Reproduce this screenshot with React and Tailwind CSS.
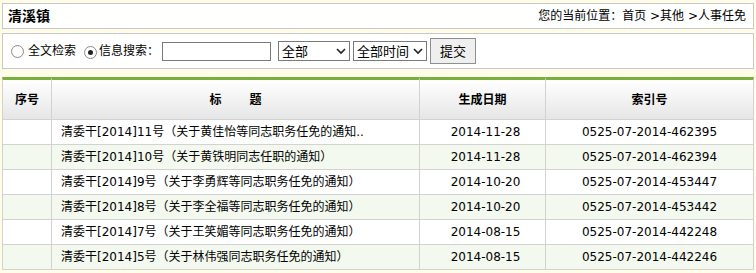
import React from "react";

const rows = [
  { title: "清委干[2014]11号（关于黄佳怡等同志职务任免的通知..", date: "2014-11-28", code: "0525-07-2014-462395" },
  { title: "清委干[2014]10号（关于黄铁明同志任职的通知）", date: "2014-11-28", code: "0525-07-2014-462394" },
  { title: "清委干[2014]9号（关于李勇辉等同志职务任免的通知）", date: "2014-10-20", code: "0525-07-2014-453447" },
  { title: "清委干[2014]8号（关于李全福等同志职务任免的通知）", date: "2014-10-20", code: "0525-07-2014-453442" },
  { title: "清委干[2014]7号（关于王笑媚等同志职务任免的通知）", date: "2014-08-15", code: "0525-07-2014-442248" },
  { title: "清委干[2014]5号（关于林伟强同志职务任免的通知）", date: "2014-08-15", code: "0525-07-2014-442246" },
];

const font = { fontFamily: '"DejaVu Sans", Verdana, "Noto Sans CJK SC", sans-serif' };

function Radio({ checked }) {
  return (
    <span className="inline-flex w-[13px] h-[13px] rounded-full border border-[#8a8a8a] bg-white items-center justify-center">
      {checked && <span className="w-[5px] h-[5px] rounded-full bg-[#222]" />}
    </span>
  );
}

function Select({ label, width }) {
  return (
    <div
      className={`${width} h-[20px] border border-[#7a7a7a] bg-white flex items-center justify-between pl-[3px] pr-[3px] text-[13px] text-black`}
    >
      <span className="leading-none">{label}</span>
      <svg width="10" height="8" viewBox="0 0 10 8">
        <path d="M1 2 L5 6 L9 2" fill="none" stroke="#222" strokeWidth="1.6" />
      </svg>
    </div>
  );
}

export default function App() {
  return (
    <div className="w-[756px] h-[273px] overflow-hidden bg-[#fffce8] px-[2px] pt-[3px] text-black" style={font}>
      <div className="h-[26px] border border-[#c8c8c8] bg-white flex items-center justify-between pl-[5px] pr-[7px]">
        <span className="text-[14px] font-bold leading-none">清溪镇</span>
        <span className="text-[12px] leading-none">您的当前位置：首页 &gt;其他 &gt;人事任免</span>
      </div>

      <div className="mt-[4px] h-[36px] border border-[#c8c8c8] bg-white flex items-center pl-[8px] text-[12px]">
        <Radio />
        <span className="ml-[4px] leading-none">全文检索</span>
        <span className="ml-[8px]"><Radio checked /></span>
        <span className="ml-[2px] leading-none">信息搜索：</span>
        <div className="ml-[3px] w-[109px] h-[19px] border border-[#7a7a7a] bg-white" />
        <div className="ml-[7px]"><Select label="全部" width="w-[72px]" /></div>
        <div className="ml-[3px]"><Select label="全部时间" width="w-[74px]" /></div>
        <button className="ml-[3px] w-[46px] h-[26px] border border-[#8f8f8f] bg-[#efefef] text-[13px] leading-none">
          提交
        </button>
      </div>

      <div className="mt-[8px] text-[12px]">
        <div className="grid grid-cols-[50px_368px_126px_208px] h-[43px]">
          {["序号", "标　　 题", "生成日期", "索引号"].map((h, i) => (
            <div
              key={h}
              className={`border-t-[3px] border-t-[#77b03c] border-r border-b border-[#d2d2d2] ${i === 0 ? "border-l" : ""} bg-gradient-to-b from-white to-[#e6e6e6] flex items-center justify-center font-bold whitespace-pre`}
            >
              {h}
            </div>
          ))}
        </div>
        {rows.map((r, i) => (
          <div
            key={r.code}
            className={`grid grid-cols-[50px_368px_126px_208px] h-[25px] ${i % 2 === 1 ? "bg-[#f4f9ef]" : "bg-white"}`}
          >
            <div className="border-l border-r border-b border-[#d2d2d2]" />
            <div className="border-r border-b border-[#d2d2d2] flex items-center pl-[9px] whitespace-nowrap overflow-hidden">
              {r.title}
            </div>
            <div className="border-r border-b border-[#d2d2d2] flex items-center justify-center pl-[6px]">{r.date}</div>
            <div className="border-r border-b border-[#d2d2d2] flex items-center justify-center">{r.code}</div>
          </div>
        ))}
      </div>
    </div>
  );
}
